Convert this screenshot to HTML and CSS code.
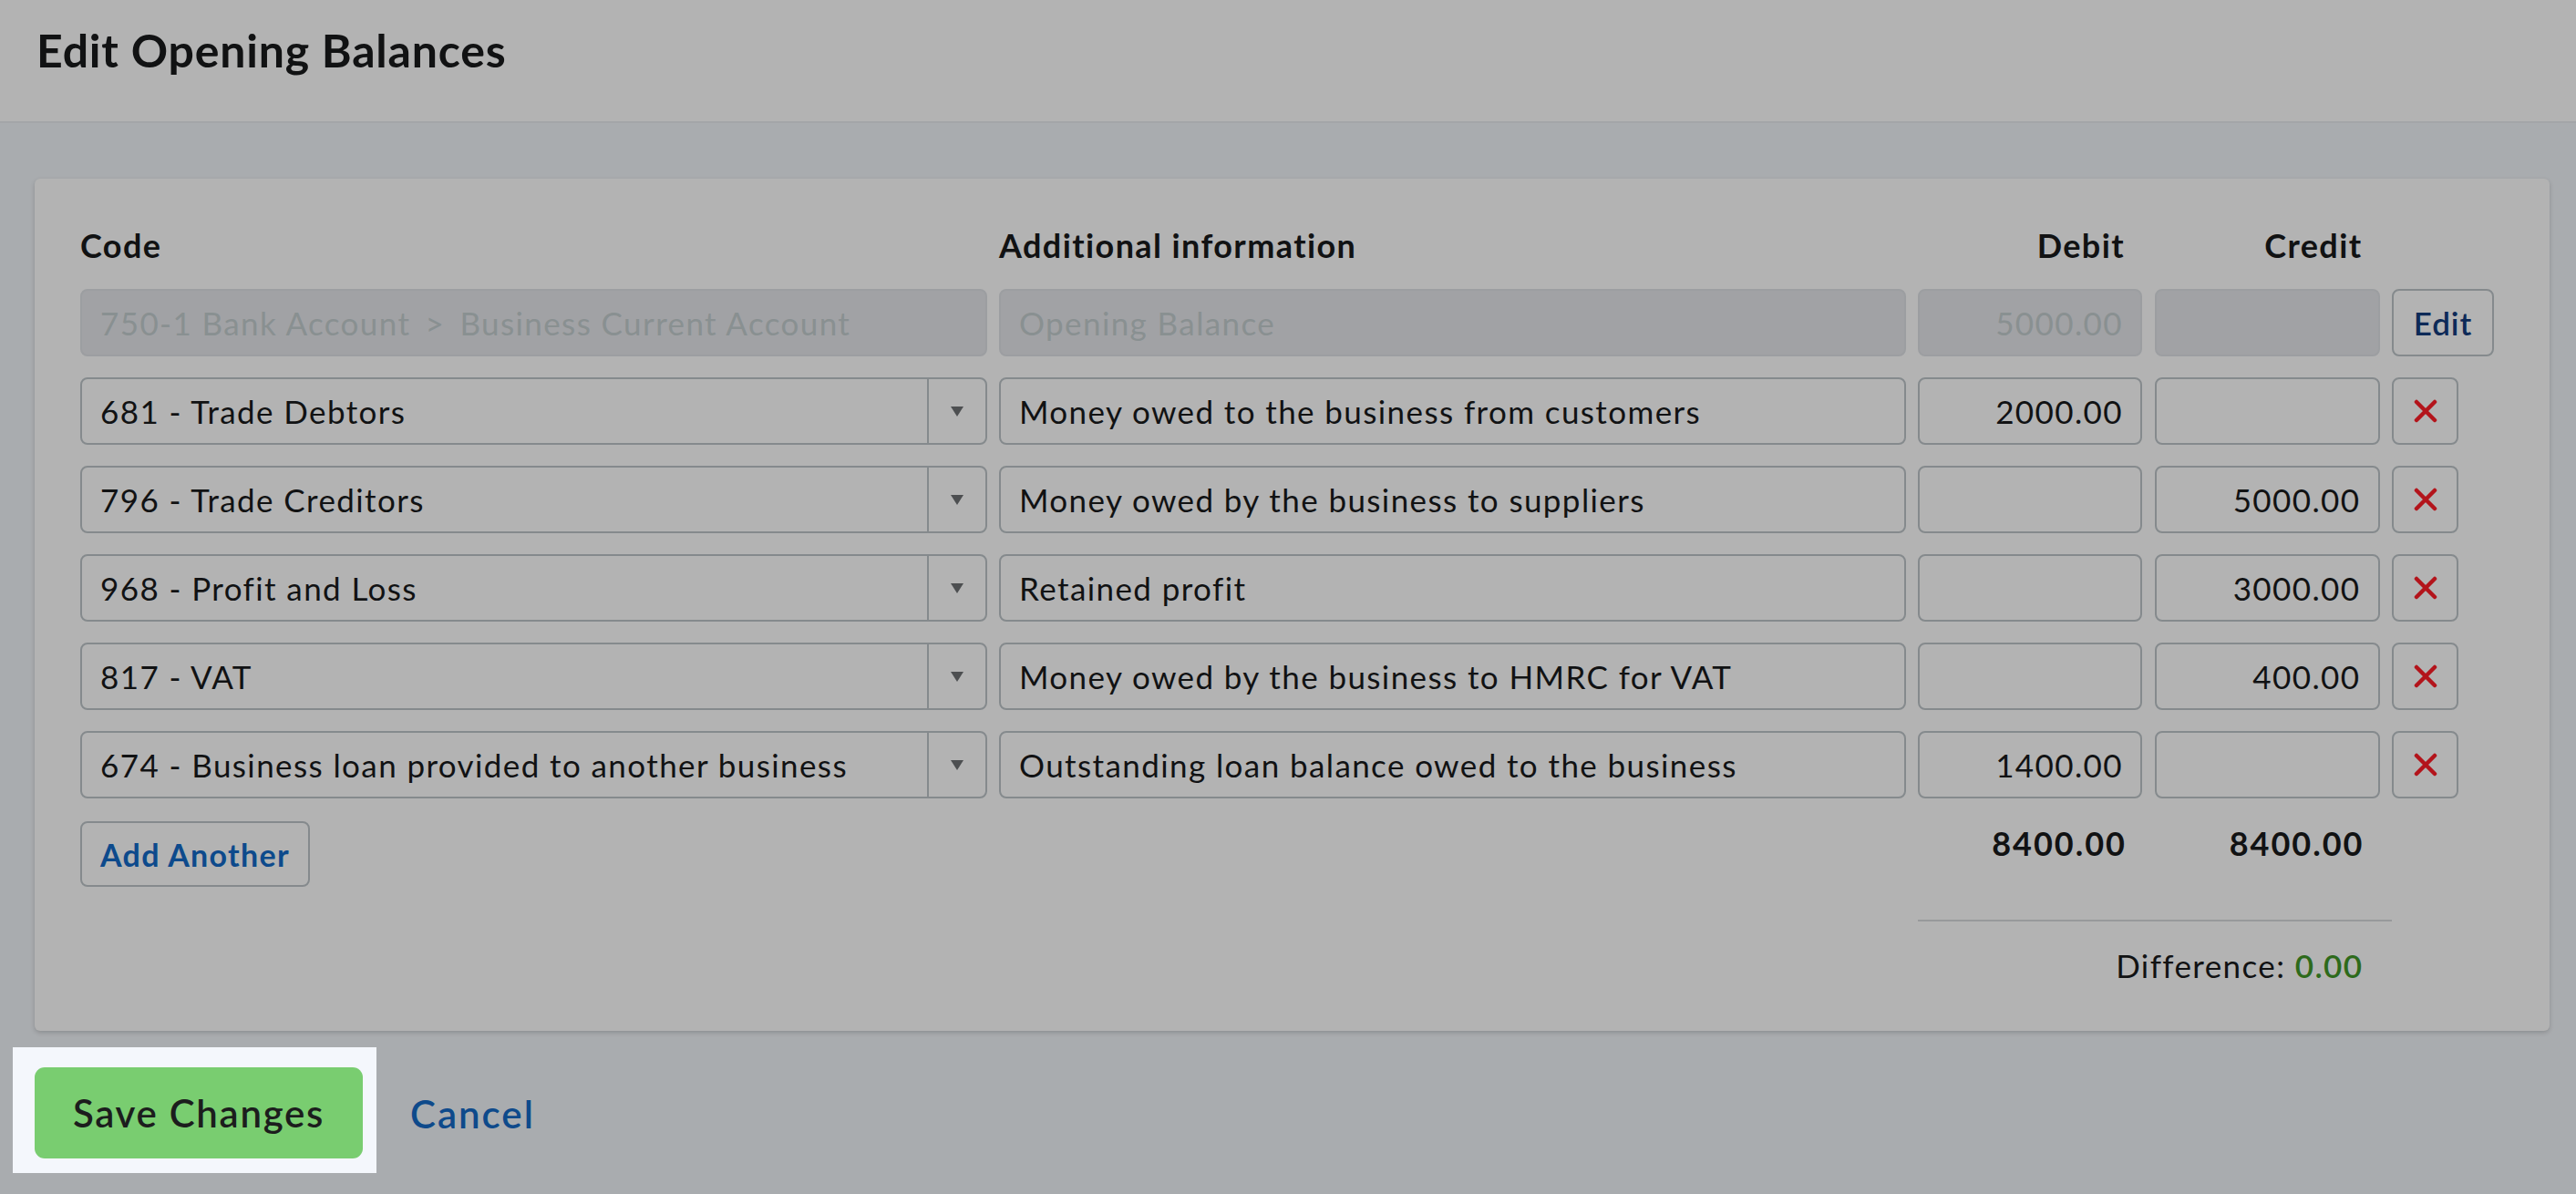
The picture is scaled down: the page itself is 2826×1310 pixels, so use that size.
FILE: index.html
```html
<!DOCTYPE html>
<html lang="en">
<head>
  <meta charset="UTF-8">
  <meta name="viewport" content="width=device-width, initial-scale=1.0">
  <title>Edit Opening Balances</title>
  <link rel="stylesheet" href="styles.css">
</head>
<body>
  <header class="topbar">
    <h1>Edit Opening Balances</h1>
  </header>
  <main class="page">
    <section class="card">
      <div class="grid head">
        <div>Code</div>
        <div>Additional information</div>
        <div class="num">Debit</div>
        <div class="num">Credit</div>
        <div></div>
      </div>

      <div class="grid line">
        <input class="field" disabled value="750-1 Bank Account &thinsp;&gt;&thinsp; Business Current Account">
        <input class="field" disabled value="Opening Balance">
        <input class="field num" disabled value="5000.00">
        <input class="field num" disabled value="">
        <button class="btn-edit">Edit</button>
      </div>

      <div class="grid line">
        <div class="select"><span class="select-text">681 - Trade Debtors</span><span class="caret"></span></div>
        <input class="field" value="Money owed to the business from customers">
        <input class="field num" value="2000.00">
        <input class="field num" value="">
        <button class="btn-remove"><svg viewBox="0 0 26 26" width="26" height="26"><path d="M3 3 L23 23 M23 3 L3 23" stroke="#b3141b" stroke-width="4.5" stroke-linecap="round"/></svg></button>
      </div>

      <div class="grid line">
        <div class="select"><span class="select-text">796 - Trade Creditors</span><span class="caret"></span></div>
        <input class="field" value="Money owed by the business to suppliers">
        <input class="field num" value="">
        <input class="field num" value="5000.00">
        <button class="btn-remove"><svg viewBox="0 0 26 26" width="26" height="26"><path d="M3 3 L23 23 M23 3 L3 23" stroke="#b3141b" stroke-width="4.5" stroke-linecap="round"/></svg></button>
      </div>

      <div class="grid line">
        <div class="select"><span class="select-text">968 - Profit and Loss</span><span class="caret"></span></div>
        <input class="field" value="Retained profit">
        <input class="field num" value="">
        <input class="field num" value="3000.00">
        <button class="btn-remove"><svg viewBox="0 0 26 26" width="26" height="26"><path d="M3 3 L23 23 M23 3 L3 23" stroke="#b3141b" stroke-width="4.5" stroke-linecap="round"/></svg></button>
      </div>

      <div class="grid line">
        <div class="select"><span class="select-text">817 - VAT</span><span class="caret"></span></div>
        <input class="field" value="Money owed by the business to HMRC for VAT">
        <input class="field num" value="">
        <input class="field num" value="400.00">
        <button class="btn-remove"><svg viewBox="0 0 26 26" width="26" height="26"><path d="M3 3 L23 23 M23 3 L3 23" stroke="#b3141b" stroke-width="4.5" stroke-linecap="round"/></svg></button>
      </div>

      <div class="grid line">
        <div class="select"><span class="select-text">674 - Business loan provided to another business</span><span class="caret"></span></div>
        <input class="field" value="Outstanding loan balance owed to the business">
        <input class="field num" value="1400.00">
        <input class="field num" value="">
        <button class="btn-remove"><svg viewBox="0 0 26 26" width="26" height="26"><path d="M3 3 L23 23 M23 3 L3 23" stroke="#b3141b" stroke-width="4.5" stroke-linecap="round"/></svg></button>
      </div>

      <div class="grid totals">
        <div><button class="btn-add">Add Another</button></div>
        <div></div>
        <div class="total">8400.00</div>
        <div class="total">8400.00</div>
      </div>

      <div class="grid summary">
        <div class="rule"></div>
        <div class="difference">Difference: <span class="ok">0.00</span></div>
      </div>
    </section>

    <div class="actions">
      <div class="spotlight">
        <button class="btn-save">Save Changes</button>
      </div>
      <a class="cancel" href="#">Cancel</a>
    </div>
  </main>
</body>
</html>
```

FILE: styles.css
```css
* {
  box-sizing: border-box;
}
body {
  margin: 0;
  font-family: Lato, 'Noto Sans', sans-serif;
  background: #a9acaf;
  color: #111213;
  height: 1310px;
  overflow: hidden;
}
.topbar {
  background: #b3b3b3;
  height: 135px;
  border-bottom: 2px solid #a3a5a8;
  padding: 25px 40px 0;
}
.topbar h1 {
  margin: 0;
  font-size: 50px;
  line-height: 1.2;
  font-weight: 700;
  letter-spacing: 0.8px;
}
.page {
  padding: 61px 29px 0 38px;
}
.card {
  background: #b3b3b3;
  border-radius: 6px;
  box-shadow: 0 2px 5px rgba(0, 0, 0, 0.18);
  padding: 52px 61px 51px 50px;
}
.grid {
  display: grid;
  grid-template-columns: 1fr 1fr 246px 247px 112px;
  column-gap: 13.5px;
}
.head {
  font-size: 36px;
  font-weight: 700;
  line-height: 1.2;
  letter-spacing: 1.4px;
}
.head .num {
  text-align: right;
  padding-right: 19px;
}
.line {
  height: 74px;
  margin-top: 23px;
}
.head + .line {
  margin-top: 26px;
}
.field {
  font-family: inherit;
  font-size: 35px;
  letter-spacing: 1.4px;
  color: #111213;
  background: transparent;
  border: 2px solid #858a8d;
  border-radius: 8px;
  padding: 0 19px 0 20px;
  height: 74px;
  width: 100%;
  min-width: 0;
}
.field.num {
  text-align: right;
}
.field:disabled {
  background: #a1a2a5;
  border-color: #9c9ea1;
  color: #899091;
}
.select {
  display: flex;
  align-items: stretch;
  border: 2px solid #858a8d;
  border-radius: 8px;
  font-size: 35px;
  letter-spacing: 1.4px;
  min-width: 0;
}
.select-text {
  flex: 1;
  display: flex;
  align-items: center;
  padding-left: 20px;
  white-space: nowrap;
  overflow: hidden;
}
.caret {
  width: 64px;
  border-left: 2px solid #858a8d;
  display: flex;
  align-items: center;
  justify-content: center;
}
.caret::after {
  content: "";
  border-left: 7px solid transparent;
  border-right: 7px solid transparent;
  border-top: 11px solid #4d4f51;
}
.btn-edit,
.btn-remove,
.btn-add {
  font-family: inherit;
  background: transparent;
  border: 2px solid #858a8d;
  border-radius: 8px;
  cursor: pointer;
}
.btn-edit {
  font-size: 35px;
  font-weight: 600;
  letter-spacing: 1px;
  color: #0d2a58;
  height: 74px;
  width: 112px;
}
.btn-remove {
  width: 73px;
  height: 74px;
  justify-self: start;
  display: flex;
  align-items: center;
  justify-content: center;
  padding: 0;
}
.totals {
  margin-top: 25px;
}
.btn-add {
  font-size: 34px;
  font-weight: 700;
  letter-spacing: 1.3px;
  color: #0d4a8c;
  height: 72px;
  padding: 0 20px;
}
.total {
  font-size: 36px;
  font-weight: 700;
  letter-spacing: 2px;
  text-align: right;
  padding: 2px 17px 0 0;
}
.summary {
  margin-top: 36px;
}
.rule {
  grid-column: 3 / 5;
  margin-right: -13.5px;
  border-top: 2px solid #98999b;
}
.difference {
  grid-column: 3 / 5;
  text-align: right;
  padding-right: 18px;
  margin-top: 27px;
  font-size: 35px;
  letter-spacing: 1.4px;
  line-height: 1.2;
}
.ok {
  color: #2d6a1b;
  font-weight: 600;
}
.actions {
  display: flex;
  align-items: center;
  margin-top: 18px;
}
.spotlight {
  background: #f4f7fc;
  margin-left: -24px;
  padding: 22px 15px 16px 24px;
}
.btn-save {
  font-family: inherit;
  font-size: 42px;
  font-weight: 600;
  letter-spacing: 1.7px;
  color: #1c1d1d;
  background: #79cd70;
  border: none;
  border-radius: 11px;
  width: 360px;
  height: 100px;
  cursor: pointer;
}
.cancel {
  margin-left: 37px;
  margin-top: 8px;
  font-size: 42px;
  font-weight: 600;
  letter-spacing: 2px;
  color: #0e4a8b;
  text-decoration: none;
}
```
